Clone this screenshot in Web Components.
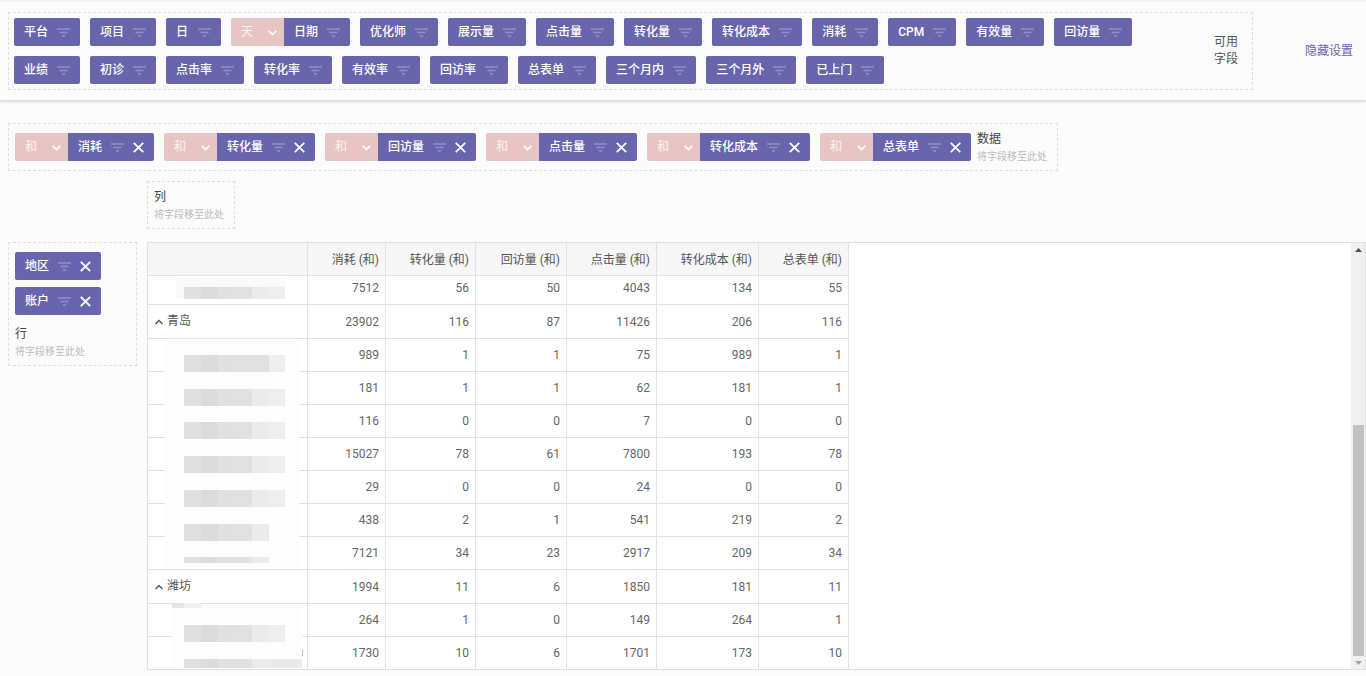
<!DOCTYPE html>
<html lang="zh-CN">
<head>
<meta charset="utf-8">
<meta name="viewport" content="width=device-width, initial-scale=1">
<title>数据透视</title>
<style>
  html, body { margin: 0; min-height: 100%; }
  body {
    background: #fbfbfb;
    color: #555;
    font: 12px/17px Roboto, "Noto Sans CJK SC", sans-serif;
  }
</style>
</head>
<body>
<pivot-app></pivot-app>

<script>
/* Shared helper: attaches an open root filled with the given markup. */
function shadow(host, html) {
  host.attachShadow({ mode: 'open' }).innerHTML = html;
}

/* A draggable field: optional aggregate drop-down, name, filter, optional close. */
class FieldChip extends HTMLElement {
  connectedCallback() {
    const agg = this.getAttribute('agg');
    const name = this.textContent;
    shadow(this, `
      <style>
        :host { display: flex; flex: none; height: 28px; border-radius: 2px; overflow: hidden; color: #fff; }
        .agg { display: flex; position: relative; width: 53px; background: #e8c5c5; }
        select { appearance: none; width: 100%; border: 0; margin: 0; padding: 0 10px; background: none; color: #fffc; font: inherit; outline-offset: -2px; }
        option { color: #555; }
        .agg svg { position: absolute; right: 7px; top: 12px; pointer-events: none; }
        .body { display: flex; align-items: center; box-sizing: border-box; min-width: 55px; padding: 0 10px; background: #6965ac; }
        .name { flex: auto; font-weight: 500; white-space: nowrap; margin-right: 9px; }
        button { display: flex; border: 0; padding: 0; background: none; color: inherit; cursor: pointer; }
        .close { margin-left: 9px; }
        svg { display: block; }
      </style>
      ${agg ? `<label class="agg"><select aria-label="${name}"><option>${agg}</option></select>
        <svg width="9" height="6" viewBox="0 0 9 6" fill="none" stroke="#fff" stroke-width="1.6"><path d="M.7.8 4.5 4.6 8.3.8"/></svg></label>` : ''}
      <div class="body">
        <span class="name"><slot></slot></span>
        <button class="filter" aria-label="筛选">
          <svg width="13" height="9" viewBox="0 0 13 9" fill="none" stroke="#918ec6" stroke-width="1.3"><path d="M0 1h13M2.5 4.5h8M5 8h3"/></svg>
        </button>
        ${this.hasAttribute('closable') ? `<button class="close" aria-label="移除">
          <svg width="11" height="11" viewBox="0 0 11 11" fill="none" stroke="#fff" stroke-width="1.8"><path d="M.8.8l9.4 9.4M10.2.8.8 10.2"/></svg></button>` : ''}
      </div>`);
  }
}
customElements.define('field-chip', FieldChip);

/* Dashed area that fields are dropped into. */
class DropZone extends HTMLElement {
  connectedCallback() {
    shadow(this, `
      <style>
        :host { display: flex; box-sizing: border-box; border: 1px dashed #dfdfdf; padding: 9px 6px; gap: 6px; }
        :host([stacked]) { flex-direction: column; align-items: flex-start; gap: 11px; padding-bottom: 5px; }
        .chips { display: flex; gap: 10px; }
        :host([stacked]) .chips { flex-direction: column; gap: 7px; }
        :host(:not([stacked])) .text { margin-top: -2px; }
        .title { color: #444; }
        .hint { color: #bbb; white-space: nowrap; font-size: 10px; }
        :host([empty]) { padding-right: 10px; }
        :host([empty]) .chips { display: none; }
      </style>
      <div class="chips"><slot></slot></div>
      <div class="text"><div class="title">${this.getAttribute('label')}</div><div class="hint">将字段移至此处</div></div>`);
  }
}
customElements.define('drop-zone', DropZone);

/* Top bar with every available field. */
class FieldBar extends HTMLElement {
  connectedCallback() {
    const chips = list => list.map(f => {
      const [name, agg] = f.split(':');
      return `<field-chip${agg ? ` agg="${agg}"` : ''}>${name}</field-chip>`;
    }).join('');
    shadow(this, `
      <style>
        :host { display: flex; align-items: center; box-sizing: border-box; padding: 10px 13px 10px 8px; gap: 52px;
                border-top: 2px solid #f3f3f3; border-bottom: 1px solid #e0e0e0; box-shadow: 0 1px 2px #0002; }
        .zone { display: flex; flex: 1; align-items: center; justify-content: space-between; border: 1px dashed #dfdfdf; padding: 5px 14px 5px 5px; }
        .rows { display: grid; gap: 10px; }
        .row { display: flex; gap: 10px; }
        .label { width: 24px; flex: none; color: #555; }
        a { color: #6965ac; text-decoration: none; white-space: nowrap; }
      </style>
      <div class="zone">
        <div class="rows">
          <div class="row">${chips(['平台', '项目', '日', '日期:天', '优化师', '展示量', '点击量', '转化量', '转化成本', '消耗', 'CPM', '有效量', '回访量'])}</div>
          <div class="row">${chips(['业绩', '初诊', '点击率', '转化率', '有效率', '回访率', '总表单', '三个月内', '三个月外', '已上门'])}</div>
        </div>
        <div class="label">可用字段</div>
      </div>
      <a href="#">隐藏设置</a>`);
  }
}
customElements.define('field-bar', FieldBar);

/* Pixelated cover over the account names. */
class NameMosaic extends HTMLElement {
  connectedCallback() {
    const tones = ['#dfe0e1', '#dbdbdb', '#e0e0df', '#e1e1e1', '#ebebeb', '#eeeeef'];
    const strip = (y, h, n = 6, x = 36) => tones.slice(0, n).map((c, i) =>
      `<rect x="${x + i * 17}" y="${y}" width="${i === 5 ? 16 : 17}" height="${h}" fill="${i === 4 && y === 79 ? '#dfe2e1' : c}"/>`).join('');
    shadow(this, `
      <style>:host { display: block; } svg { display: block; }</style>
      <svg width="158" height="393" viewBox="0 0 158 393" shape-rendering="crispEdges" aria-hidden="true">
        <path fill="#fafafa" d="M28 2h109v21H28z"/>
        <path fill="#fdfdfd" d="M17 65h134v226H17zM24 328h130v65H24z"/>
        ${strip(11, 12)}${strip(79, 17)}${strip(113, 17)}${strip(146, 17)}${strip(180, 17)}${strip(214, 17)}
        ${strip(248, 17, 5)}${strip(281, 6, 5)}${strip(349, 17)}${strip(383, 9)}
        <path fill="#e5e5e5" d="M24 327h12v5H24z"/><path fill="#f1f1f1" d="M36 327h17v5H36z"/>
        <path fill="#e8ebea" d="M121 383h33v9h-33z"/>
        <path fill="#8ecbef" d="M154 374h1v6h-1z"/>
      </svg>`);
  }
}
customElements.define('name-mosaic', NameMosaic);

class PivotTable extends HTMLElement {
  connectedCallback() {
    const heads = ['消耗', '转化量', '回访量', '点击量', '转化成本', '总表单'];
    const data = [
      ['', 7512, 56, 50, 4043, 134, 55],
      ['青岛', 23902, 116, 87, 11426, 206, 116],
      ['', 989, 1, 1, 75, 989, 1],
      ['', 181, 1, 1, 62, 181, 1],
      ['', 116, 0, 0, 7, 0, 0],
      ['', 15027, 78, 61, 7800, 193, 78],
      ['', 29, 0, 0, 24, 0, 0],
      ['', 438, 2, 1, 541, 219, 2],
      ['', 7121, 34, 23, 2917, 209, 34],
      ['潍坊', 1994, 11, 6, 1850, 181, 11],
      ['', 264, 1, 0, 149, 264, 1],
      ['', 1730, 10, 6, 1701, 173, 10]
    ];
    const row = ([name, ...nums], i) => `<tr class="${name ? 'group' : i ? '' : 'first'}"><th scope="row">${name
      ? `<button aria-label="折叠"><svg width="8" height="6" viewBox="0 0 8 6" fill="none" stroke="#555" stroke-width="1.4"><path d="M.5 5 4 1.5 7.5 5"/></svg></button><span>${name}</span>`
      : ''}</th>${nums.map(n => `<td>${n}</td>`).join('')}</tr>`;
    shadow(this, `
      <style>
        :host { display: flex; justify-content: space-between; background: #fff; border: 1px solid #e0e0e0; border-right: 0; }
        .grid { position: relative; }
        table { border-collapse: separate; border-spacing: 0; table-layout: fixed; width: 701px; }
        th, td { box-sizing: border-box; height: 33px; padding: 1px 6px 0 7px; border: 0 solid #e2e2e2; border-width: 0 1px 1px 0; text-align: right; font-weight: 400; white-space: nowrap; }
        td { color: #666; }
        thead th { padding-top: 3px; background: #f6f6f6; }
        .first > * { height: 29px; padding-bottom: 4px; }
        .group > * { height: 34px; }
        tbody th { text-align: left; }
        tbody tr:last-child > * { height: 32px; border-bottom: 0; }
        button { border: 0; padding: 0; margin-right: 4px; background: none; vertical-align: middle; line-height: 0; }
        span { vertical-align: middle; }
        name-mosaic { position: absolute; left: 0; top: 33px; }
        .bar { display: flex; flex-direction: column; align-items: center; box-sizing: border-box; width: 15px; padding: 5px 1px 4px; background: #f0f0f0; border-right: 1px solid #e4e4e4; }
        .track { flex: 1; display: flex; flex-direction: column; justify-content: flex-end; width: 11px; padding: 5px 0; }
        .thumb { height: 58%; background: #c1c1c1; }
      </style>
      <div class="grid">
        <table>
          <colgroup><col style="width:160px"><col style="width:78px"><col style="width:90px"><col style="width:91px"><col style="width:90px"><col style="width:102px"><col style="width:90px"></colgroup>
          <thead><tr><th></th>${heads.map(h => `<th scope="col">${h} (和)</th>`).join('')}</tr></thead>
          <tbody>${data.map(row).join('')}</tbody>
        </table>
        <name-mosaic></name-mosaic>
      </div>
      <div class="bar" aria-hidden="true">
        <svg width="7" height="4" viewBox="0 0 7 4"><path fill="#505050" d="M0 4 3.5 0 7 4z"/></svg>
        <div class="track"><div class="thumb"></div></div>
        <svg width="7" height="4" viewBox="0 0 7 4"><path fill="#a3a3a3" d="M0 0h7L3.5 4z"/></svg>
      </div>`);
  }
}
customElements.define('pivot-table', PivotTable);

class PivotApp extends HTMLElement {
  connectedCallback() {
    const values = ['消耗', '转化量', '回访量', '点击量', '转化成本', '总表单'];
    shadow(this, `
      <style>
        :host { display: block; }
        main { display: grid; grid-template-columns: 129px 1fr; column-gap: 10px; padding: 22px 0 6px 8px; }
        .values { grid-column: 1 / -1; justify-self: start; height: 48px; padding-right: 10px; }
        .columns { grid-column: 2; justify-self: start; height: 48px; margin: 10px 0 13px; }
        .rows { align-self: start; }
      </style>
      <field-bar></field-bar>
      <main>
        <drop-zone class="values" label="数据">${values.map(v => `<field-chip agg="和" closable>${v}</field-chip>`).join('')}</drop-zone>
        <drop-zone class="columns" label="列" empty></drop-zone>
        <drop-zone class="rows" label="行" stacked><field-chip closable>地区</field-chip><field-chip closable>账户</field-chip></drop-zone>
        <pivot-table></pivot-table>
      </main>`);
  }
}
customElements.define('pivot-app', PivotApp);
</script>
</body>
</html>
